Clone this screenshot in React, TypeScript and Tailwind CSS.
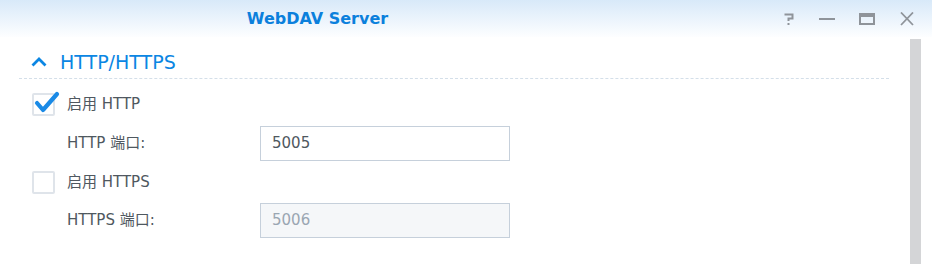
const labelFont = { fontFamily: '"DejaVu Sans", "Noto Sans CJK SC", sans-serif' };

function Checkbox({ checked }: { checked: boolean }) {
  return (
    <span className="relative inline-block h-[23px] w-[23px] shrink-0 rounded-[2px] border-2 border-[#dfe4ea] bg-white">
      {checked && (
        <svg
          className="absolute left-[0px] top-[-6px]"
          width="26"
          height="26"
          viewBox="0 0 26 26"
          fill="none"
        >
          <path
            d="M3 14 L9 21 L23 5"
            stroke="#1a8ae6"
            strokeWidth="4.2"
            strokeLinecap="round"
            strokeLinejoin="round"
          />
        </svg>
      )}
    </span>
  );
}

function TitleButtons() {
  return (
    <div className="flex items-center gap-[24px] pr-[17px] text-[#8f949a]">
      <svg width="12" height="14" viewBox="0 0 12 14" fill="none">
        <path d="M1.5 2.5 L9.5 2.5 L9.5 6.5 L5.5 6.5 L5.5 9" stroke="currentColor" strokeWidth="2" />
        <rect x="4.5" y="11" width="2" height="2" fill="currentColor" />
      </svg>
      <svg width="16" height="14" viewBox="0 0 16 14">
        <rect x="0" y="6" width="16" height="2" fill="currentColor" />
      </svg>
      <svg width="16" height="14" viewBox="0 0 16 14" fill="none">
        <rect x="1" y="2" width="14" height="10" stroke="currentColor" strokeWidth="2" />
        <rect x="1" y="2" width="14" height="3" fill="currentColor" />
      </svg>
      <svg width="16" height="14" viewBox="0 0 16 14" fill="none">
        <path d="M2 0.5 L14 13 M14 0.5 L2 13" stroke="currentColor" strokeWidth="1.8" />
      </svg>
    </div>
  );
}

export default function App() {
  return (
    <div className="flex h-[264px] w-[932px] flex-col overflow-hidden bg-white">
      <div className="flex h-[37px] shrink-0 items-center bg-gradient-to-b from-[#d8e9f9] to-[#fdfeff]">
        <div className="w-[635px] text-center">
          <span
            className="text-[16px] font-bold text-[#0b80dc]"
            style={{ fontFamily: '"DejaVu Sans", Verdana, sans-serif' }}
          >
            WebDAV Server
          </span>
        </div>
        <div className="flex flex-1 justify-end">
          <TitleButtons />
        </div>
      </div>

      <div className="flex flex-1">
        <div className="w-[889px] pl-[19px] pt-[12px]" style={labelFont}>
          <div className="flex h-[26px] items-center gap-[13px] pl-[12px] text-[#0b86e3]">
            <svg width="16" height="10" viewBox="0 0 16 10" fill="none">
              <path d="M1.5 8.5 L8 2 L14.5 8.5" stroke="currentColor" strokeWidth="2.8" />
            </svg>
            <span className="text-[19px]">HTTP/HTTPS</span>
          </div>
          <div className="mt-[3px] border-t border-dashed border-[#d4dfe9]" />

          <div className="pl-[13px] pt-[14px] text-[15px] text-[#4f5860]">
            <div className="flex h-[23px] items-center gap-[12px]">
              <Checkbox checked />
              <span>启用 HTTP</span>
            </div>
            <div className="mt-[10px] flex h-[35px] items-center">
              <span className="w-[228px] pl-[35px]">HTTP 端口:</span>
              <div className="flex h-[35px] w-[250px] items-center border border-[#c6d0db] bg-white px-[11px] text-[#4f5860]">
                5005
              </div>
            </div>
            <div className="mt-[10px] flex h-[23px] items-center gap-[12px]">
              <Checkbox checked={false} />
              <span>启用 HTTPS</span>
            </div>
            <div className="mt-[9px] flex h-[35px] items-center">
              <span className="w-[228px] pl-[35px]">HTTPS 端口:</span>
              <div className="flex h-[35px] w-[250px] items-center border border-[#c6d0db] bg-[#f5f7f9] px-[11px] text-[#9aa6b2]">
                5006
              </div>
            </div>
          </div>
        </div>
        <div className="ml-[21px] mt-[2px] w-[11px] bg-[#d4d5d7]" />
      </div>
    </div>
  );
}
